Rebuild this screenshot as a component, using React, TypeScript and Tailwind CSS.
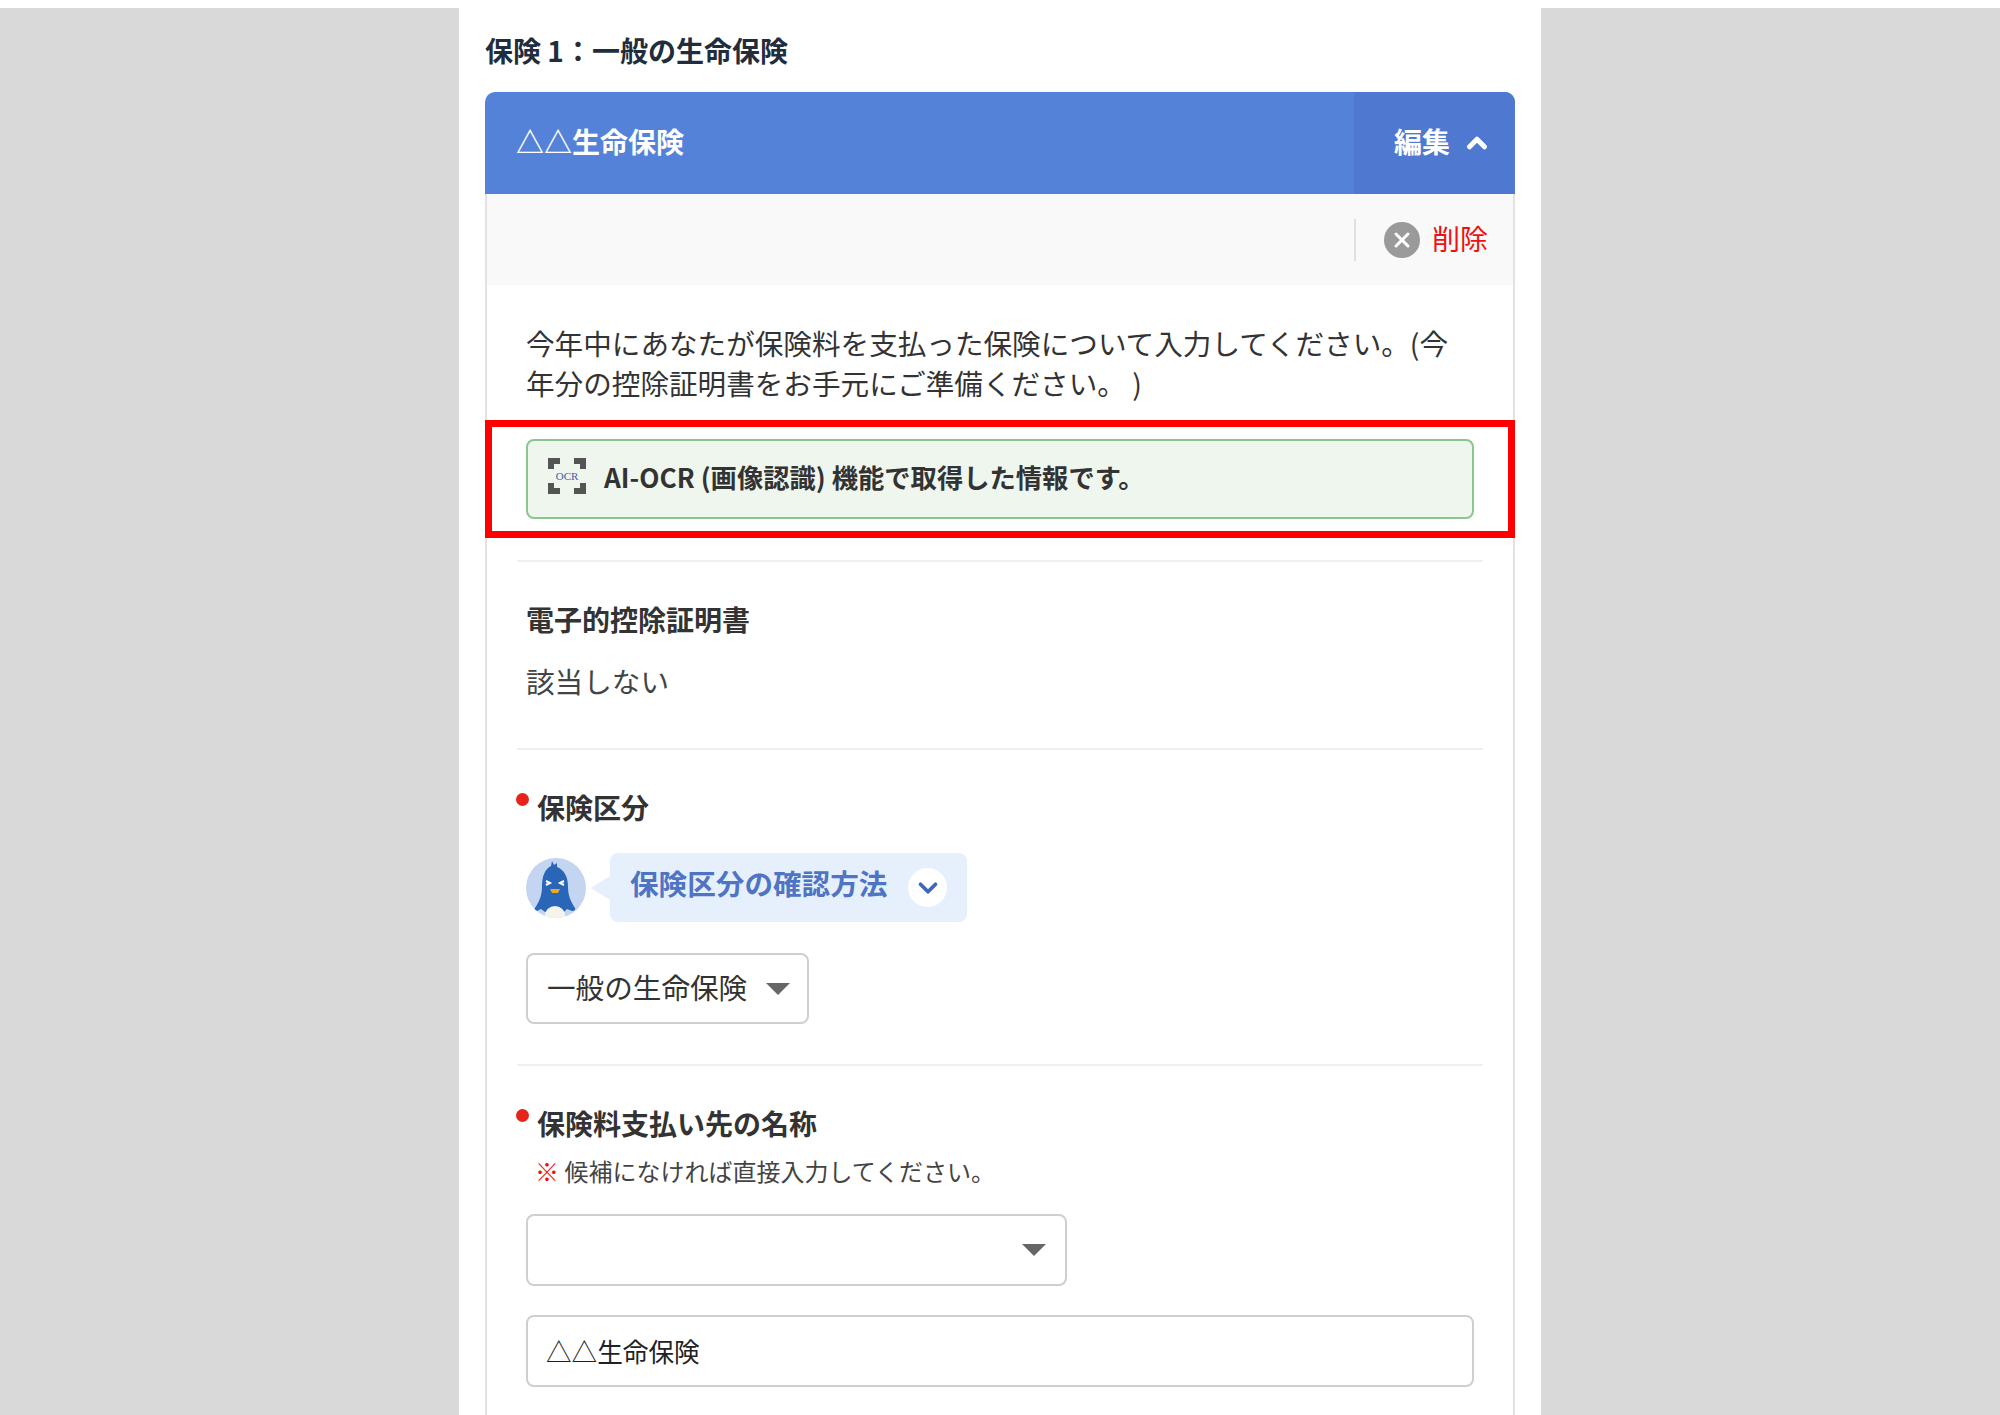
import React from 'react';
import { ChevronUp, ChevronDown, X } from 'lucide-react';

// --- Small shared pieces ---
const Caret = () => (
  <span className="w-0 h-0 border-x-[12px] border-x-transparent border-t-[12px] border-t-[#666]" />
);

const RequiredLabel = ({ text }: { text: string }) => (
  <div className="flex items-start h-[40px] ml-[-10px]">
    <span className="w-[13px] h-[13px] rounded-full bg-[#e8231a] mt-[5px] mr-[8px] shrink-0" />
    <span className="pb-[2px] text-[28px] leading-[38px] font-bold text-[#333]">{text}</span>
  </div>
);

const OcrIcon = () => (
  <svg width="40" height="38" viewBox="0 0 40 38" className="shrink-0 mb-[6px]">
    <g fill="#555">
      <path d="M1 1h12v6H7v5H1z" />
      <path d="M39 1H27v6h6v5h6z" />
      <path d="M1 37h12v-6H7v-5H1z" />
      <path d="M39 37H27v-6h6v-5h6z" />
    </g>
    <text x="20" y="23" textAnchor="middle" fontSize="11" fill="#4a5aa8" fontFamily="'Liberation Serif', serif">OCR</text>
  </svg>
);

const Penguin = () => (
  <svg width="60" height="60" viewBox="0 0 60 60" className="shrink-0">
    <defs>
      <clipPath id="avatar"><circle cx="30" cy="30" r="30" /></clipPath>
    </defs>
    <circle cx="30" cy="30" r="30" fill="#c3d5f0" />
    <g clipPath="url(#avatar)">
      <path d="M25 8l1-5 2 4 3-2v4c6 2 11 9 11 19 0 9 2 14 7 22 1 2-1 3-3 3l-5-2-3 3H19l-4-3-4 2c-2 0-3-1-2-3 5-8 7-13 7-22 0-10 3-17 9-20z" fill="#2a66b8" />
      <ellipse cx="29" cy="57" rx="10" ry="9" fill="#f4f4ec" />
      <path d="M20 23l4 2-4 2" fill="none" stroke="#fff" strokeWidth="2" />
      <path d="M38 23l-4 2 4 2" fill="none" stroke="#fff" strokeWidth="2" />
      <path d="M24 31h10l-2 4h-6z" fill="#f0a81e" />
    </g>
  </svg>
);

export default function App() {
  return (
    <div className="h-[1415px] overflow-hidden bg-white pt-[8px] font-['Noto_Sans_CJK_JP','Noto_Sans',sans-serif]">
      <div className="h-full bg-[#d9d9d9] flex justify-center">
        <main className="w-[1082px] h-full bg-white px-[26px] pt-[22px]">
          <h2 className="text-[28px] leading-[40px] font-bold text-[#1f2d3d]">保険 1：一般の生命保険</h2>

          {/* --- Insurance card --- */}
          <section className="mt-[22px]">
            <header className="h-[102px] flex items-stretch justify-between bg-[#5582d9] rounded-t-[10px] overflow-hidden text-white">
              <span className="pl-[31px] pb-[5px] text-[28px] font-bold self-center">△△生命保険</span>
              <button className="w-[161px] bg-[#4f79d0] flex items-center justify-end gap-[12px] pr-[23px] text-[28px] font-bold">
                <span className="pb-[5px]">編集</span>
                <ChevronUp size={30} strokeWidth={4} />
              </button>
            </header>

            <div className="h-[91px] bg-[#f9f9f9] border-x-2 border-[#e2e2e2] flex items-center justify-end pr-[25px]">
              <div className="h-[42px] flex items-center border-l-2 border-[#e0e0e0] pl-[28px] gap-[12px]">
                <span className="w-[36px] h-[36px] rounded-full bg-[#9a9a9a] flex items-center justify-center text-white">
                  <X size={24} strokeWidth={3} />
                </span>
                <span className="pb-[3px] text-[28px] text-[#f01010]">削除</span>
              </div>
            </div>

            <div className="border-x-2 border-[#e2e2e2] pb-[40px]">
              <p className="mx-[39px] pt-[38px] text-[28.6px] leading-[40px] text-[#333]">
                今年中にあなたが保険料を支払った保険について入力してください。(今年分の控除証明書をお手元にご準備ください。 )
              </p>

              {/* highlighted notice */}
              <div className="mx-[-2px] mt-[17px] h-[118px] border-[7px] border-[#ff0000] flex items-center px-[34px]">
                <div className="w-full h-[80px] rounded-[8px] border-2 border-[#8cc68f] bg-[#eef6ee] flex items-center pl-[19px] gap-[17px]">
                  <OcrIcon />
                  <span className="pb-[5px] text-[26.3px] font-bold text-[#333]">AI-OCR (画像認識) 機能で取得した情報です。</span>
                </div>
              </div>

              <div className="mx-[30px] mt-[22px] border-t-2 border-[#f0f0f0] px-[9px] pt-[37px] pb-[47px]">
                <h3 className="text-[28px] leading-[40px] font-bold text-[#333]">電子的控除証明書</h3>
                <p className="mt-[22px] text-[28.6px] leading-[40px] text-[#444]">該当しない</p>
              </div>

              <div className="mx-[30px] border-t-2 border-[#f0f0f0] px-[9px] pt-[38px] pb-[40px]">
                <RequiredLabel text="保険区分" />
                <div className="flex items-center mt-[25px]">
                  <Penguin />
                  <span className="w-0 h-0 border-y-[12px] border-y-transparent border-r-[19px] border-r-[#e6f0fd] ml-[5px]" />
                  <div className="w-[357px] h-[69px] rounded-[8px] bg-[#e6f0fd] flex items-center justify-between pl-[20px] pr-[20px]">
                    <span className="pb-[8px] text-[28.6px] font-bold text-[#4f74c4]">保険区分の確認方法</span>
                    <span className="w-[39px] h-[39px] rounded-full bg-white flex items-center justify-center text-[#3f68bd]">
                      <ChevronDown size={30} strokeWidth={3} />
                    </span>
                  </div>
                </div>
                <div className="mt-[31px] w-[283px] h-[71px] rounded-[8px] border-2 border-[#cfcfcf] flex items-center justify-between pl-[19px] pr-[17px]">
                  <span className="pb-[3px] text-[28.6px] text-[#333]">一般の生命保険</span>
                  <Caret />
                </div>
              </div>

              <div className="mx-[30px] border-t-2 border-[#f0f0f0] px-[9px] pt-[38px]">
                <RequiredLabel text="保険料支払い先の名称" />
                <p className="mt-[7px] ml-[9px] text-[24px] leading-[40px] text-[#444]">
                  <span className="text-[#f01010]">※</span> 候補になければ直接入力してください。
                </p>
                <div className="mt-[23px] w-[541px] h-[72px] rounded-[8px] border-2 border-[#cfcfcf] flex items-center justify-end pr-[19px]">
                  <Caret />
                </div>
                <div className="mt-[29px] h-[72px] rounded-[8px] border-2 border-[#cfcfcf] flex items-center pl-[18px]">
                  <span className="text-[25.6px] text-[#222]">△△生命保険</span>
                </div>
              </div>
            </div>
          </section>
        </main>
      </div>
    </div>
  );
}
